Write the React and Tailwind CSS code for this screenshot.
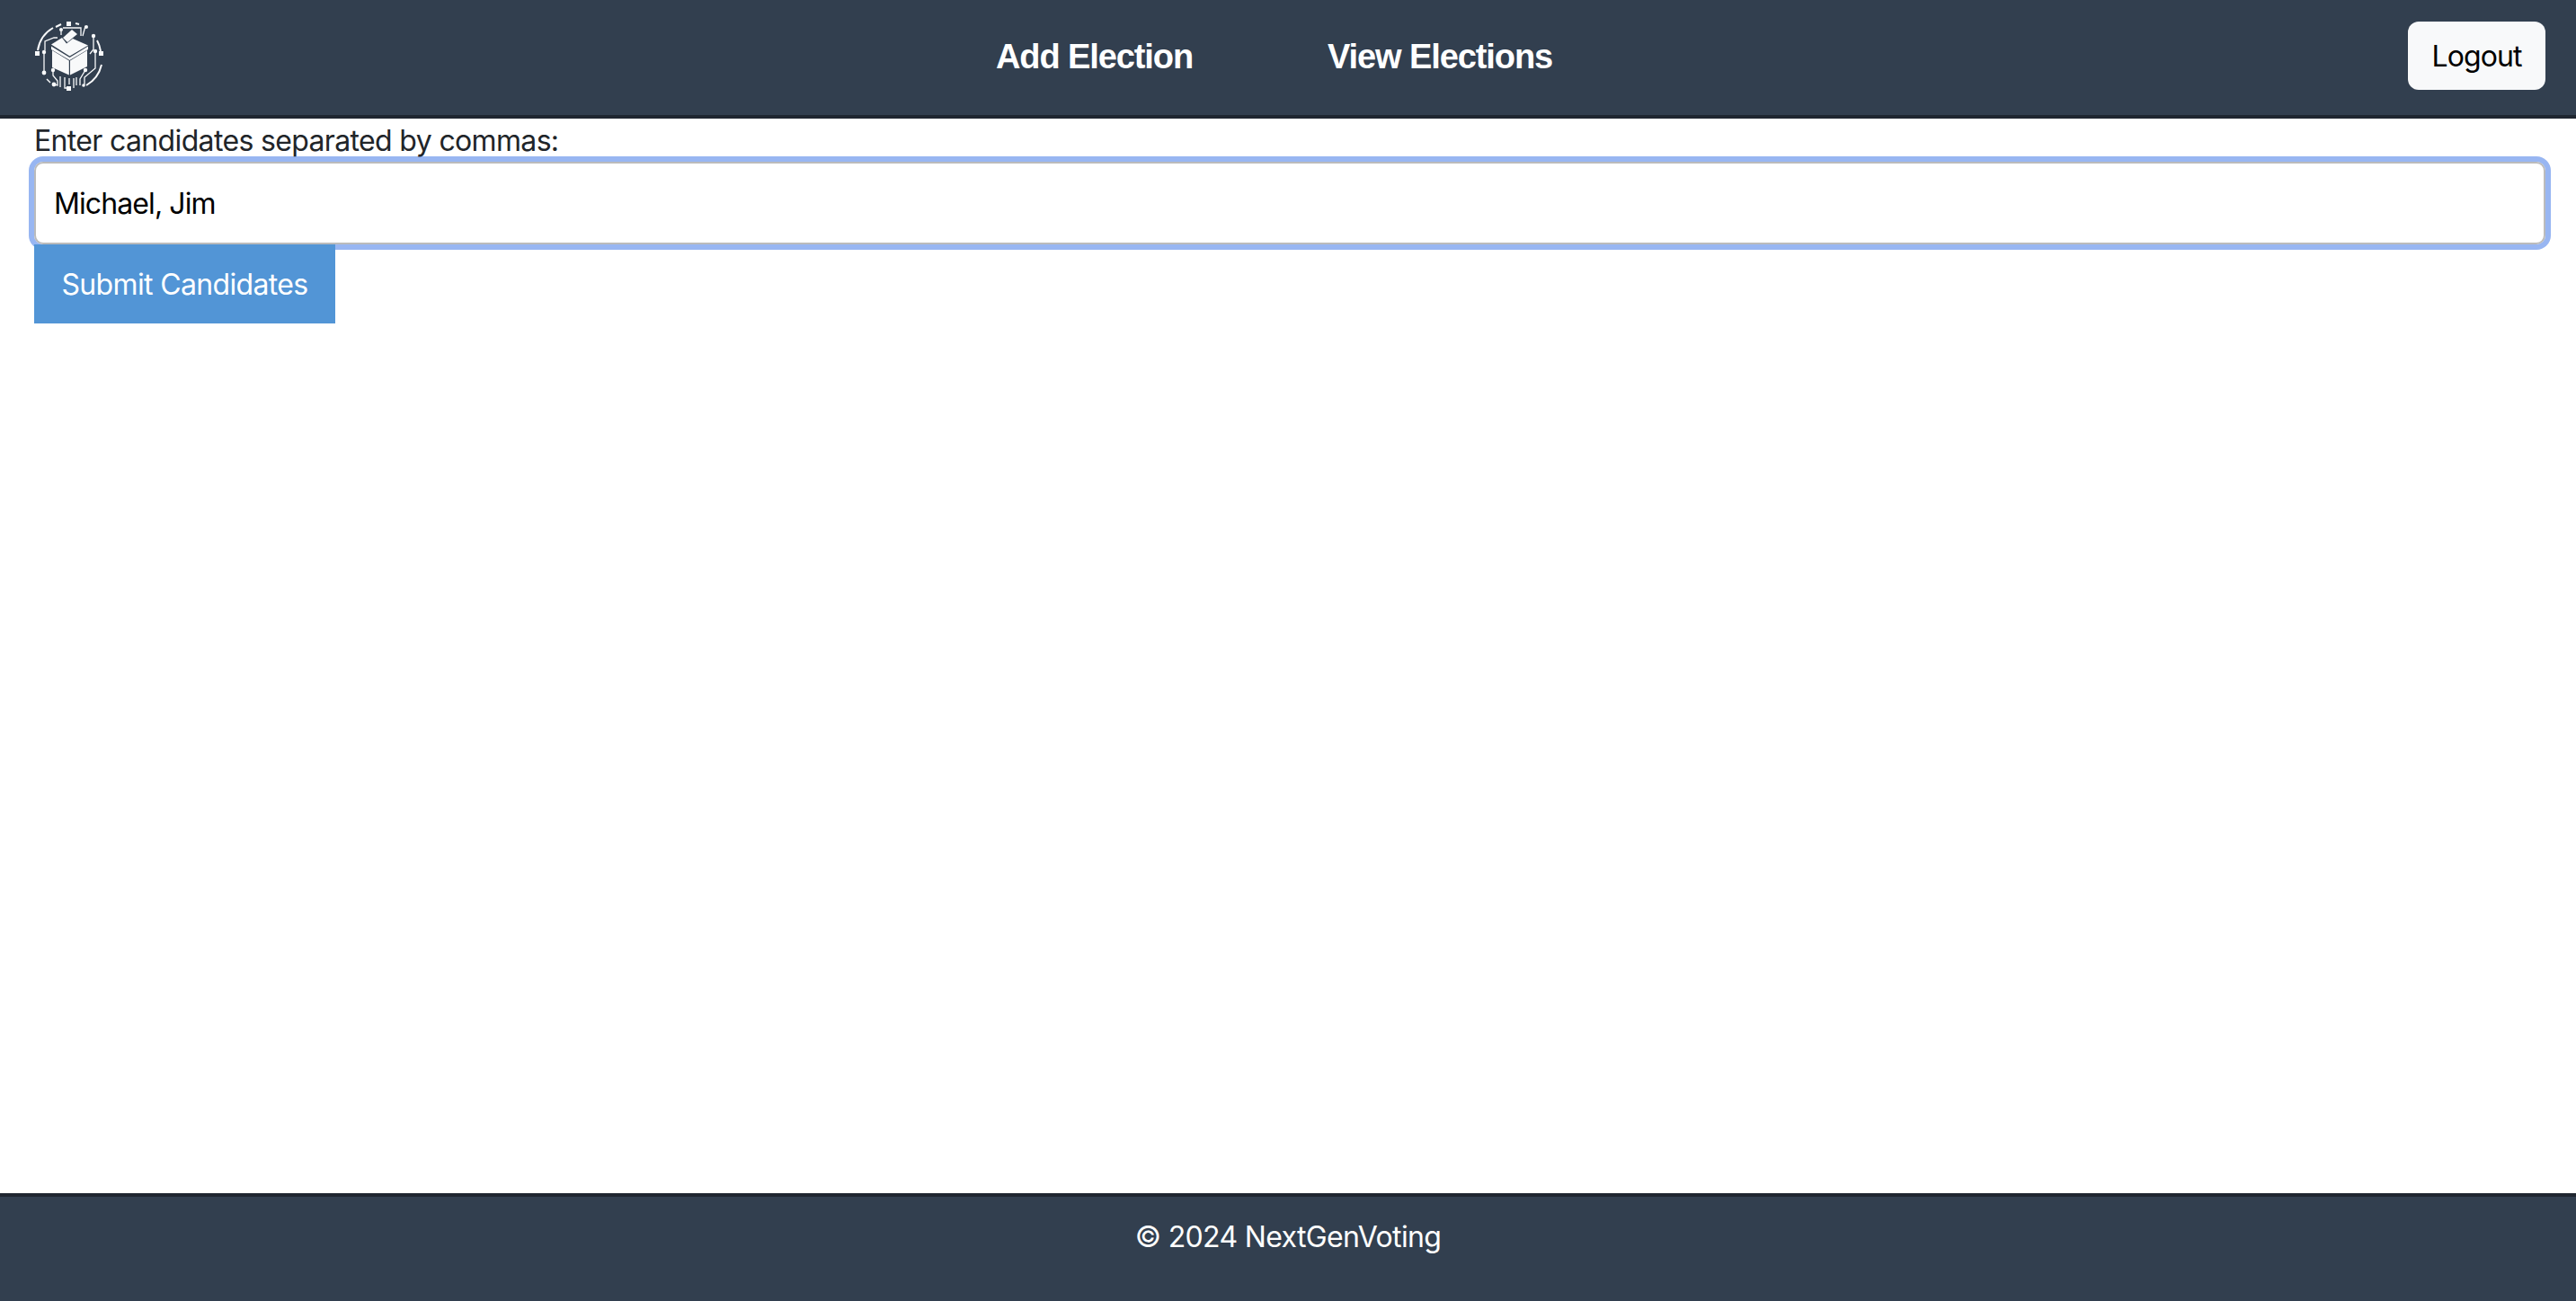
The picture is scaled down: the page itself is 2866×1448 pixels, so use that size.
import React, { useState } from 'react';

const Logo = () => {
  return (
    <svg viewBox="19 13 76 78" className="w-[76px] h-[78px]" fill="none" stroke="#f8f9fa" strokeWidth="1.3">
      {/* ring */}
      <path d="M22 46 A35 35 0 0 1 39 21" strokeWidth="2" />
      <path d="M42 20 L48 17" strokeWidth="2" />
      <path d="M64 16 L68 17" strokeWidth="2" />
      <path d="M88 35 A35 35 0 0 1 92 47" strokeWidth="2" />
      <path d="M93 62 A36 36 0 0 1 76 85" strokeWidth="2" />
      <path d="M32 78 L36 82" strokeWidth="1.4" />
      {/* ballot box */}
      <path d="M50 32 L60 23 L66 28 L55 37 Z" fill="#f8f9fa" stroke="none" />
      <path d="M37 39.5 L49 32 L54 38.5 L61 33 L78 40.5 L57.5 52.5 Z" fill="#f8f9fa" stroke="none" />
      <path d="M37 41.5 L57.5 54 L78 41.5 L78 45 L57.5 57 L37 45 Z" fill="#f8f9fa" stroke="none" />
      <path d="M38 46 L56.8 57.5 L56.8 73.5 L38 65 Z" fill="#f8f9fa" stroke="none" />
      <path d="M77 46 L58 57.5 L58 73.5 L77 64 Z" fill="#f8f9fa" stroke="none" />
      {/* traces */}
      <path d="M48 29 L48 24 M30 46 L30 36 L40 32 L44 32" />
      <path d="M50 21 L70 21 L70 30 M75 19 L72 30" />
      <path d="M84 31 L84 45 L80 50" />
      <path d="M29 49 L29 70" />
      <path d="M86 48 L86 66 L74 76 L74 84" />
      <path d="M39 68 L39 74 L44 80 L44 85 L40 84" />
      <path d="M75 68 L69 78 L69 85" />
      <path d="M47 75 L47 87 M52 76 L52 88 L54 88 M57 77 L57 84 M62 77 L62 88 M65 76 L65 85" />
      {/* nodes */}
      <rect x="54" y="14" width="5" height="5" fill="#f8f9fa" stroke="none" />
      <rect x="19" y="47" width="5" height="5" fill="#f8f9fa" stroke="none" />
      <rect x="90" y="47" width="5" height="5" fill="#f8f9fa" stroke="none" />
      <rect x="54" y="86" width="5" height="5" fill="#f8f9fa" stroke="none" />
      <circle cx="48" cy="23" r="2" fill="#f8f9fa" stroke="none" />
      <circle cx="76" cy="20" r="2" fill="#f8f9fa" stroke="none" />
      <circle cx="84" cy="30" r="2.2" fill="#f8f9fa" stroke="none" />
      <circle cx="29" cy="48" r="2.2" fill="#f8f9fa" stroke="none" />
      <circle cx="86" cy="47" r="2.2" fill="#f8f9fa" stroke="none" />
      <circle cx="29" cy="71" r="2.4" fill="#f8f9fa" stroke="none" />
      <circle cx="39" cy="68" r="2.2" fill="#f8f9fa" stroke="none" />
      <circle cx="75" cy="68" r="2.2" fill="#f8f9fa" stroke="none" />
      <circle cx="40" cy="84" r="2.4" fill="#f8f9fa" stroke="none" />
      <circle cx="73" cy="85" r="1.8" fill="#f8f9fa" stroke="none" />
    </svg>
  );
};

const App = () => {
  const [candidates, setCandidates] = useState('Michael, Jim');

  return (
    <div className="min-h-screen flex flex-col bg-white font-['Inter',sans-serif] text-[32px] leading-[48px] tracking-[-0.65px] text-[#212529]">
      <header className="h-[132px] shrink-0 flex items-center pl-[39px] pr-[34px] pb-[4px] bg-[#323f4f] border-b-4 border-[#1f2630]">
        <Logo />
        <nav className="flex gap-[150px] ml-[993px] mt-[2px] font-['Liberation_Sans',sans-serif] font-bold text-[38px] tracking-[-1.1px] text-white">
          <a href="#add">Add Election</a>
          <a href="#view">View Elections</a>
        </nav>
        <button className="ml-auto w-[153px] h-[76px] pt-[1px] rounded-xl bg-[#f8f9fa] text-black tracking-[-0.9px]">Logout</button>
      </header>

      <main className="flex-1 pl-[38px] pr-[34px]">
        <label htmlFor="candidates" className="block pt-[1px] h-[48px]">Enter candidates separated by commas:</label>
        <input
          id="candidates"
          value={candidates}
          onChange={(e) => setCandidates(e.target.value)}
          className="block w-full h-[92px] px-[20px] rounded-[10px] border-2 border-[#bbbbbb] text-black tracking-[-0.9px] outline-none shadow-[0_0_0_6px_#98b6f2]"
        />
        <button className="block w-[335px] h-[88px] pt-[1px] bg-[#5295d6] text-white">Submit Candidates</button>
      </main>

      <footer className="h-[120px] shrink-0 pt-[21px] text-center text-white bg-[#323f4f] border-t-4 border-[#1f2630]">
        © 2024 NextGenVoting
      </footer>
    </div>
  );
};

export default App;
